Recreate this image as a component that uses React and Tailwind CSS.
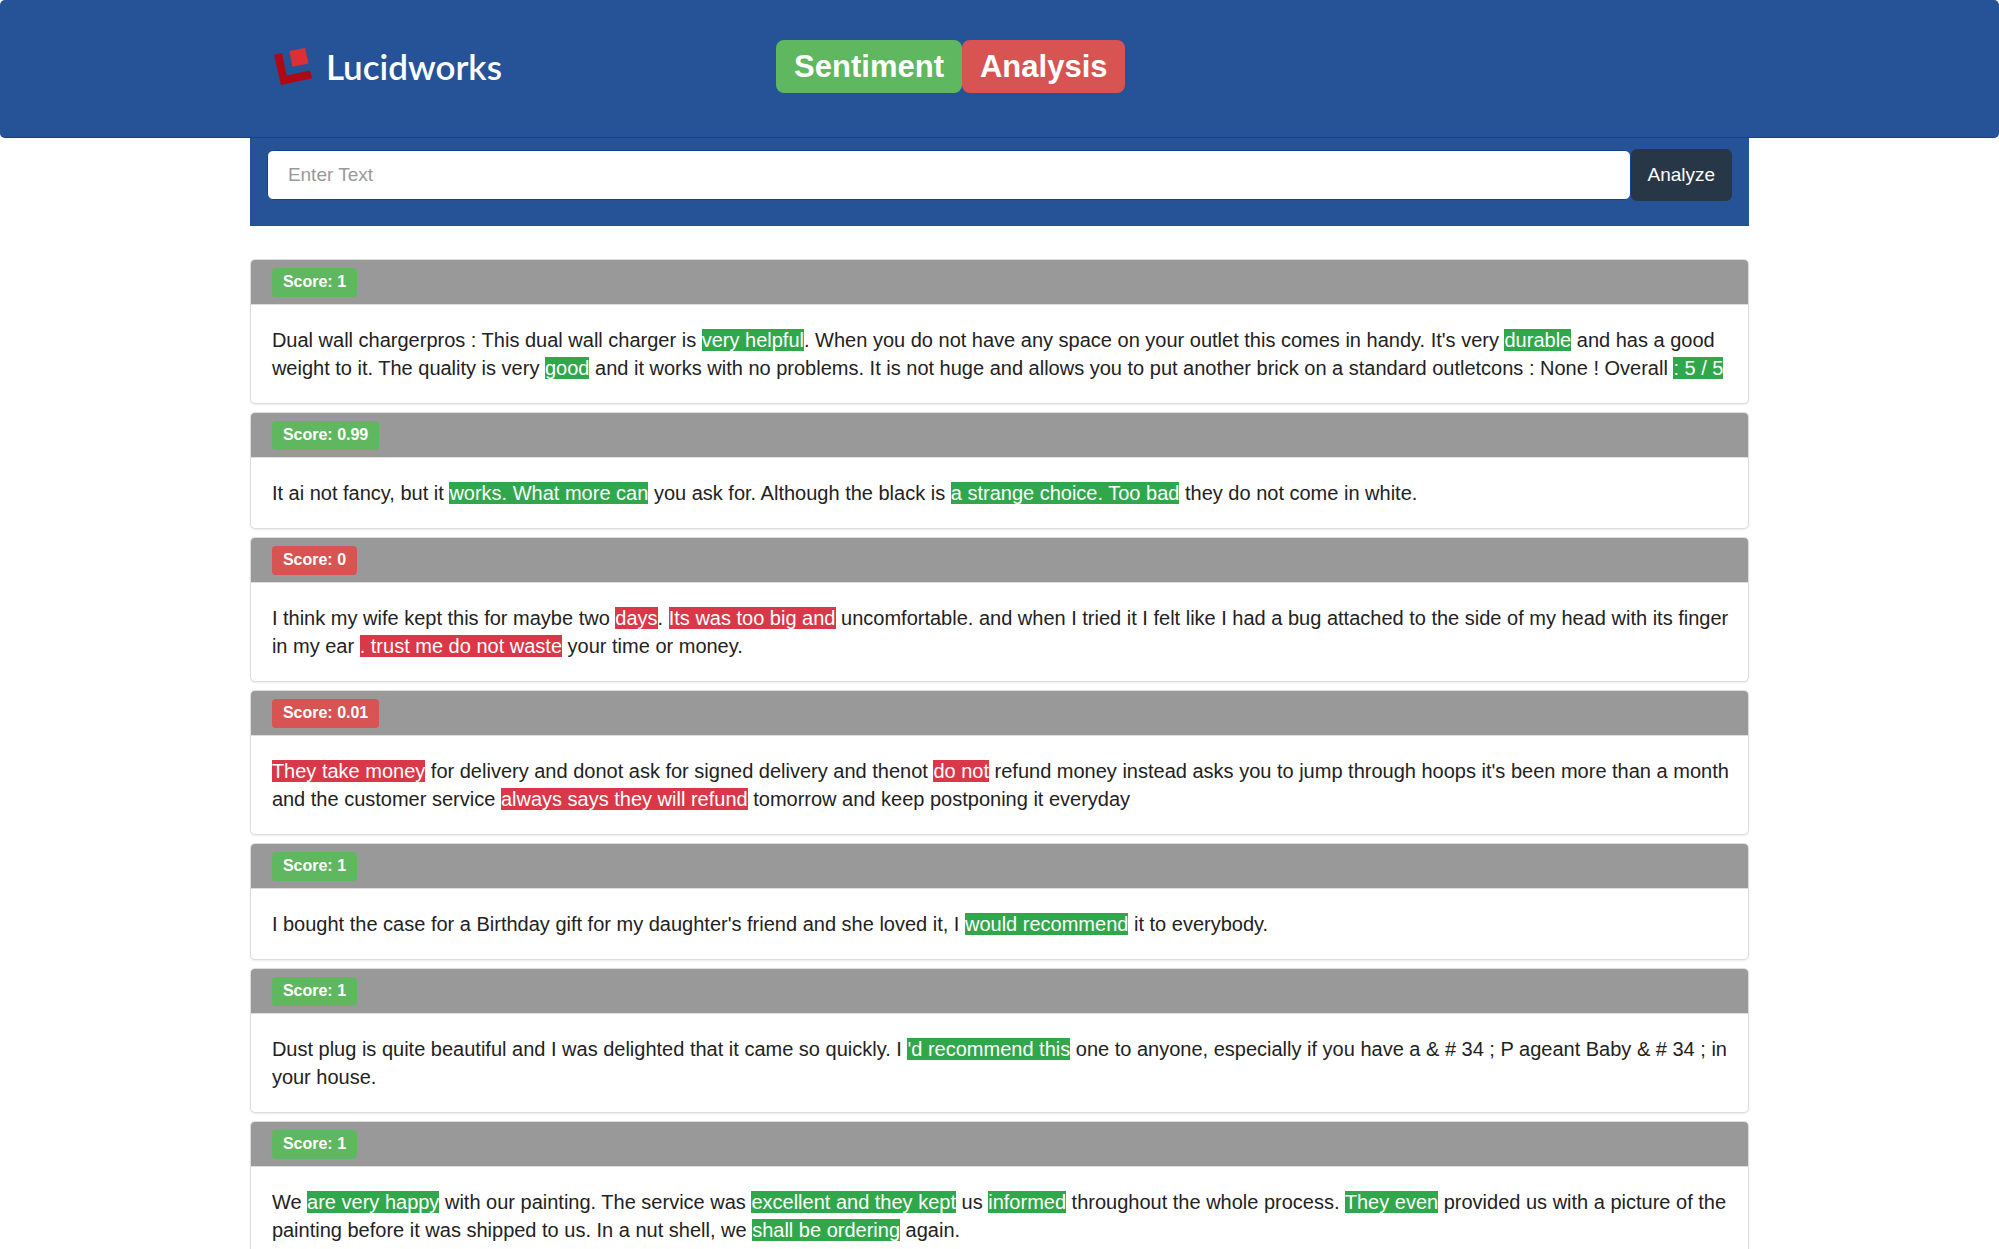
const REVIEWS = [
  {
    score: '1',
    positive: true,
    parts: [
      'Dual wall chargerpros : This dual wall charger is ',
      ['very helpful'],
      ". When you do not have any space on your outlet this comes in handy. It's very ",
      ['durable'],
      ' and has a good weight to it. The quality is very ',
      ['good'],
      ' and it works with no problems. It is not huge and allows you to put another brick on a standard outletcons : None ! Overall ',
      [': 5 / 5'],
    ],
  },
  {
    score: '0.99',
    positive: true,
    parts: [
      'It ai not fancy, but it ',
      ['works. What more can'],
      ' you ask for. Although the black is ',
      ['a strange choice. Too bad'],
      ' they do not come in white.',
    ],
  },
  {
    score: '0',
    positive: false,
    parts: [
      'I think my wife kept this for maybe two ',
      ['days'],
      '. ',
      ['Its was too big and'],
      ' uncomfortable. and when I tried it I felt like I had a bug attached to the side of my head with its finger in my ear ',
      ['. trust me do not waste'],
      ' your time or money.',
    ],
  },
  {
    score: '0.01',
    positive: false,
    parts: [
      ['They take money'],
      ' for delivery and donot ask for signed delivery and thenot ',
      ['do not'],
      " refund money instead asks you to jump through hoops it's been more than a month and the customer service ",
      ['always says they will refund'],
      ' tomorrow and keep postponing it everyday',
    ],
  },
  {
    score: '1',
    positive: true,
    parts: [
      "I bought the case for a Birthday gift for my daughter's friend and she loved it, I ",
      ['would recommend'],
      ' it to everybody.',
    ],
  },
  {
    score: '1',
    positive: true,
    parts: [
      'Dust plug is quite beautiful and I was delighted that it came so quickly. I ',
      ["'d recommend this"],
      ' one to anyone, especially if you have a & # 34 ; P ageant Baby & # 34 ; in your house.',
    ],
  },
  {
    score: '1',
    positive: true,
    parts: [
      'We ',
      ['are very happy'],
      ' with our painting. The service was ',
      ['excellent and they kept'],
      ' us ',
      ['informed'],
      ' throughout the whole process. ',
      ['They even'],
      ' provided us with a picture of the painting before it was shipped to us. In a nut shell, we ',
      ['shall be ordering'],
      ' again.',
    ],
  },
];

function Logo() {
  return (
    <div className="flex items-center gap-3.5">
      <svg viewBox="0 0 38 38" className="h-[38px] w-[38px]" aria-hidden="true">
        <path d="M0 6.8L8 5L12.6 27.4L36 22.6L38 30.3L7 37Z" fill="#ac0a14" />
        <path d="M15.3 3L31 0L34.6 15.5L18.5 18.8Z" fill="#dc3034" />
      </svg>
      <span className="pb-0.5 font-['Lato',sans-serif] text-[35px] leading-9 font-semibold text-white">Lucidworks</span>
    </div>
  );
}

function Review({ score, positive, parts }) {
  return (
    <article className="overflow-hidden rounded-[5px] border border-[#ddd] bg-white shadow-[0_1px_2px_rgba(0,0,0,0.08)]">
      <header className="flex items-center border-b border-[#ddd] bg-[#999] px-[21px] pt-2 pb-[7px]">
        <span
          className={`rounded-[4px] px-[11px] pt-0.5 pb-[3px] text-base font-bold text-white ${
            positive ? 'bg-[#5fb760]' : 'bg-[#d75452]'
          }`}
        >
          Score: {score}
        </span>
      </header>
      <p className="pt-[21px] pr-2 pb-[21px] pl-[21px] text-xl leading-7">
        {parts.map((part, i) =>
          Array.isArray(part) ? (
            <mark key={i} className={`text-white ${positive ? 'bg-[#30a74b]' : 'bg-[#da3749]'}`}>
              {part[0]}
            </mark>
          ) : (
            <span key={i}>{part}</span>
          ),
        )}
      </p>
    </article>
  );
}

export default function App() {
  return (
    <div className="min-h-screen bg-white pb-8 font-['Liberation_Sans',Arial,sans-serif] text-[19px] text-[#222]">
      <header className="rounded-[5px] border-b border-[#0f4390] bg-[#265298] pt-10 pb-11">
        <div className="mx-auto flex w-3/4 items-center">
          <div className="w-[35.1%] pl-6">
            <Logo />
          </div>
          <h1 className="flex text-[31px] leading-[35px] font-bold text-white">
            <span className="rounded-lg bg-[#5fb760] px-[18px] py-[9px]">Sentiment</span>
            <span className="rounded-lg bg-[#d75452] px-[18px] py-[9px]">Analysis</span>
          </h1>
        </div>
      </header>

      <main className="mx-auto w-3/4">
        <form
          className="flex items-center bg-[#265298] px-[17px] pt-[11px] pb-[25px]"
          onSubmit={(e) => e.preventDefault()}
        >
          <input
            type="text"
            aria-label="Enter Text"
            placeholder="Enter Text"
            className="h-[50px] min-w-0 flex-1 rounded-md border border-[#0f4390] bg-white px-5 outline-none placeholder:text-[#999]"
          />
          <button type="submit" className="h-[52px] rounded-md bg-[#283747] px-[17px] text-white">
            Analyze
          </button>
        </form>

        <section className="mt-[33px] grid gap-2">
          {REVIEWS.map((review, i) => (
            <Review key={i} {...review} />
          ))}
        </section>
      </main>
    </div>
  );
}
